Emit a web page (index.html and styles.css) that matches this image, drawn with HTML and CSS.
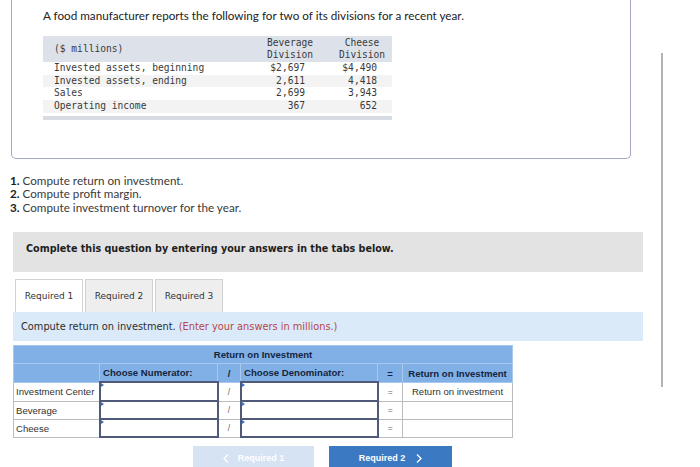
FILE: index.html
```html
<!DOCTYPE html>
<html>
<head>
<meta charset="utf-8">
<link rel="stylesheet" href="styles.css">
</head>
<body>
<div class="page">
  <section class="card">
    <p class="intro">A food manufacturer reports the following for two of its divisions for a recent year.</p>
    <div class="data-wrap">
      <table class="data">
        <colgroup><col class="w1"><col class="w2"><col class="w3"></colgroup>
        <thead>
          <tr><th class="lbl">($ millions)</th><th class="h2">Beverage<br>Division</th><th class="h3">Cheese<br>Division</th></tr>
        </thead>
        <tbody>
          <tr><td class="lbl">Invested assets, beginning</td><td class="n2">$2,697</td><td class="n3">$4,490</td></tr>
          <tr class="alt"><td class="lbl">Invested assets, ending</td><td class="n2">2,611</td><td class="n3">4,418</td></tr>
          <tr><td class="lbl">Sales</td><td class="n2">2,699</td><td class="n3">3,943</td></tr>
          <tr class="alt"><td class="lbl">Operating income</td><td class="n2">367</td><td class="n3">652</td></tr>
        </tbody>
      </table>
    </div>
  </section>

  <ol class="reqs">
    <li><b>1.</b> Compute return on investment.</li>
    <li><b>2.</b> Compute profit margin.</li>
    <li><b>3.</b> Compute investment turnover for the year.</li>
  </ol>

  <div class="instr">Complete this question by entering your answers in the tabs below.</div>

  <div class="tabs">
    <div class="tab active">Required 1</div>
    <div class="tab">Required 2</div>
    <div class="tab">Required 3</div>
  </div>

  <div class="prompt">Compute return on investment. <span class="red">(Enter your answers in millions.)</span></div>

  <table class="answer">
    <colgroup>
      <col class="a1"><col class="a2"><col class="a3"><col class="a4"><col class="a5"><col class="a6">
    </colgroup>
    <thead>
      <tr class="hr1"><th colspan="6">Return on Investment</th></tr>
      <tr class="hr2">
        <th></th>
        <th class="left">Choose Numerator:</th>
        <th>/</th>
        <th class="left">Choose Denominator:</th>
        <th>=</th>
        <th>Return on Investment</th>
      </tr>
    </thead>
    <tbody>
      <tr class="r1">
        <td class="name">Investment Center</td>
        <td class="in"></td>
        <td class="op">/</td>
        <td class="in"></td>
        <td class="op">=</td>
        <td class="res">Return on investment</td>
      </tr>
      <tr>
        <td class="name">Beverage</td>
        <td class="in"></td>
        <td class="op">/</td>
        <td class="in"></td>
        <td class="op">=</td>
        <td class="res"></td>
      </tr>
      <tr>
        <td class="name">Cheese</td>
        <td class="in"></td>
        <td class="op">/</td>
        <td class="in"></td>
        <td class="op">=</td>
        <td class="res"></td>
      </tr>
    </tbody>
  </table>

  <div class="nav">
    <div class="btn prev">
      <svg width="6" height="9" viewBox="0 0 6 9"><polyline points="5,0.5 1,4.5 5,8.5" fill="none" stroke="#ffffff" stroke-width="1.3"/></svg>
      <span>Required 1</span>
    </div>
    <div class="btn next">
      <span>Required 2</span>
      <svg width="6" height="9" viewBox="0 0 6 9"><polyline points="1,0.5 5,4.5 1,8.5" fill="none" stroke="#ffffff" stroke-width="1.3"/></svg>
    </div>
  </div>

  <div class="scrollbar"></div>
</div>
</body>
</html>
```

FILE: styles.css
```css
html, body {
  margin: 0;
  padding: 0;
  background: #ffffff;
}

.page {
  position: relative;
  width: 700px;
  height: 467px;
  overflow: hidden;
  font-family: Lato, "Open Sans", sans-serif;
  color: #2a2a2a;
}

.card {
  margin-left: 11px;
  width: 587px;
  border: 1px solid #a4a8c4;
  border-top: none;
  border-radius: 0 0 5px 5px;
  padding: 7px 0 38px 31px;
}

.intro {
  margin: 0 0 13px;
  font-size: 11.7px;
  line-height: 16px;
  color: #222;
}

.data-wrap {
  width: 349px;
  padding-bottom: 3px;
  border-bottom: 4px solid #d7dbe2;
}

.data {
  width: 349px;
  table-layout: fixed;
  border-collapse: collapse;
  font-family: "DejaVu Sans Mono", "Liberation Mono", monospace;
  font-size: 9.6px;
  color: #3a3a3a;
}

.data .w1 { width: 217px; }
.data .w2 { width: 66px; }
.data .w3 { width: 66px; }

.data th {
  background: #dde2ea;
  font-weight: normal;
  line-height: 12px;
  padding: 1px 0;
}

.data th.lbl { text-align: left; padding-left: 11px; }
.data th.h2 { text-align: center; padding-right: 6px; }
.data th.h3 { text-align: center; padding-left: 6px; }

.data td {
  padding: 0;
  line-height: 12.7px;
  height: 12.7px;
}

.data td.lbl { padding-left: 11px; }
.data td.n2 { text-align: right; padding-right: 21px; }
.data td.n3 { text-align: right; padding-right: 15px; }
.data tr.alt td { background: #f3f3f3; }

.reqs {
  list-style: none;
  margin: 15px 0 0;
  padding: 0 0 0 10px;
  font-size: 11.7px;
  line-height: 13.5px;
  color: #3a3a3a;
}

.reqs b { color: #222; }

.instr {
  margin: 18px 0 0 13px;
  width: 617px;
  height: 30px;
  padding: 10px 0 0 13px;
  background: #e3e3e3;
  font-family: "DejaVu Sans", Verdana, sans-serif;
  font-weight: bold;
  font-size: 9.6px;
  line-height: 14px;
  color: #1e1e1e;
}

.tabs {
  display: flex;
  gap: 2px;
  margin: 7px 0 0 15px;
}

.tab {
  width: 66px;
  height: 32px;
  border: 1px solid #d2d2d2;
  border-bottom: none;
  background: #eeeeee;
  font-family: "DejaVu Sans", Verdana, sans-serif;
  font-size: 9px;
  line-height: 32px;
  text-align: center;
  color: #333;
}

.tab.active { background: #ffffff; }

.prompt {
  margin-left: 13px;
  width: 622px;
  height: 29px;
  padding-left: 8px;
  background: #dbeaf8;
  font-family: "DejaVu Sans", Verdana, sans-serif;
  font-size: 9.8px;
  line-height: 29px;
  color: #2c2c2c;
}

.prompt .red { color: #b4454a; }

.answer {
  margin: 4px 0 0 13px;
  width: 499px;
  table-layout: fixed;
  border-collapse: collapse;
  font-family: "Liberation Sans", Arial, sans-serif;
  font-size: 9.6px;
}

.answer .a1 { width: 86px; }
.answer .a2 { width: 118px; }
.answer .a3 { width: 23px; }
.answer .a4 { width: 137px; }
.answer .a5 { width: 25px; }
.answer .a6 { width: 110px; }

.answer th {
  background: #80b0e6;
  border: 1px solid #a9c8ed;
  color: #16253f;
  font-weight: bold;
  text-align: center;
  padding: 0 2px;
  height: 17px;
}

.answer th.left { text-align: left; padding-left: 3px; }

.answer td {
  border: 1px solid #bcbcbc;
  height: 16px;
  padding: 0;
  color: #333;
}

.answer tr.r1 td { height: 17px; }

.answer td.name { padding-left: 2px; white-space: nowrap; }
.answer td.op { text-align: center; color: #666; font-size: 8.5px; }
.answer td.res { text-align: center; }

.answer td.in {
  position: relative;
  border: 2px solid #4f5a78;
  background: #fff;
}

.answer td.in::before {
  content: "";
  position: absolute;
  left: 0;
  top: 0;
  border-top: 2.5px solid transparent;
  border-bottom: 2.5px solid transparent;
  border-left: 3px solid #3d6dc2;
}

.nav {
  display: flex;
  gap: 15px;
  margin: 8px 0 0 193px;
}

.btn {
  height: 24px;
  display: flex;
  align-items: center;
  justify-content: center;
  font-family: "Liberation Sans", Arial, sans-serif;
  font-weight: bold;
  font-size: 9px;
  color: #ffffff;
}

.btn.prev { width: 121px; background: #d5e3f2; gap: 9px; }
.btn.next { width: 123px; background: #3b79c2; gap: 11px; }

.scrollbar {
  position: absolute;
  left: 661px;
  top: 53px;
  width: 2px;
  height: 334px;
  background: #b3b3b3;
}
```
